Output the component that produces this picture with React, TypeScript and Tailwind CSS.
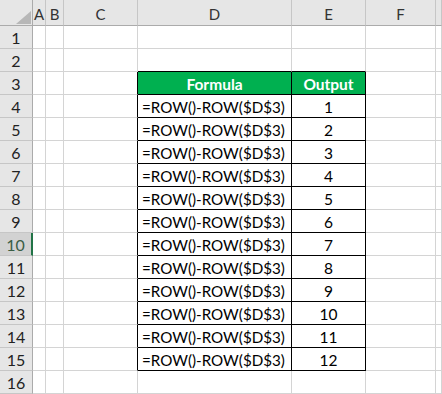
import React from "react";

const cols = [33, 13, 18, 74, 154, 74, 70, 6];
const colNames = ["", "A", "B", "C", "D", "E", "F", ""];
const font = { fontFamily: "Lato, 'Open Sans', sans-serif" };

export default function App() {
  const rows = Array.from({ length: 16 }, (_, i) => i + 1);
  const template = cols.map((c) => `${c}px`).join(" ");
  const cells: React.ReactNode[] = [];

  colNames.forEach((name, ci) => {
    if (ci === 0) {
      cells.push(
        <div
          key="corner"
          className="relative bg-[#e6e6e6] border-r border-b border-[#ababab]"
        >
          <svg className="absolute left-[16px] top-[11px]" width="15" height="13" viewBox="0 0 15 13">
            <polygon points="15,0 15,13 0,13" fill="#b7b7b7" />
          </svg>
        </div>
      );
    } else {
      cells.push(
        <div
          key={`h${ci}`}
          className="flex items-end justify-center pb-[3px] bg-[#e6e6e6] border-r border-b border-[#c6c6c6] border-b-[#ababab] text-[15px] text-[#333] leading-none whitespace-nowrap overflow-hidden"
        >
          {name}
        </div>
      );
    }
  });

  rows.forEach((r) => {
    const sel = r === 10;
    cells.push(
      <div
        key={`r${r}`}
        className={`flex items-end justify-center pb-[2px] text-[16px] leading-none border-b border-[#c6c6c6] ${
          sel
            ? "bg-[#d2d2d2] text-[#3b5e45] border-r-2 border-r-[#217346]"
            : "bg-[#e6e6e6] text-[#222] border-r border-r-[#ababab]"
        }`}
      >
        {r}
      </div>
    );
    for (let ci = 1; ci < cols.length; ci++) {
      const inTable = r >= 3 && r <= 15 && (ci === 4 || ci === 5);
      const leftOfTable = r >= 3 && r <= 15 && ci === 3;
      const aboveTable = r === 2 && (ci === 4 || ci === 5);
      const header = r === 3 && inTable;
      const rightBlack = inTable || leftOfTable;
      const bottomBlack = inTable || aboveTable;
      let content: React.ReactNode = null;
      let cls = "flex items-end pb-[2px] leading-none text-black whitespace-nowrap overflow-hidden ";
      if (inTable) {
        if (header) {
          content = ci === 4 ? "Formula" : "Output";
          cls += "text-[15.5px] justify-center font-bold text-white bg-[#00b050] ";
        } else if (ci === 4) {
          content = "=ROW()-ROW($D$3)";
          cls += "text-[15.2px] justify-start pl-[4px] bg-white ";
        } else {
          content = String(r - 3);
          cls += "text-[15.5px] justify-center bg-white ";
        }
      } else {
        cls += "bg-white ";
      }
      cls += rightBlack ? "border-r border-r-black " : "border-r border-r-[#d4d4d4] ";
      cls += bottomBlack ? "border-b border-b-black " : "border-b border-b-[#d4d4d4] ";
      cells.push(
        <div key={`c${r}-${ci}`} className={cls}>
          {content}
        </div>
      );
    }
  });

  return (
    <div className="w-[442px] h-[394px] overflow-hidden bg-white" style={font}>
      <div
        className="grid"
        style={{ gridTemplateColumns: template, gridTemplateRows: `26px repeat(16, 23px)` }}
      >
        {cells}
      </div>
    </div>
  );
}
